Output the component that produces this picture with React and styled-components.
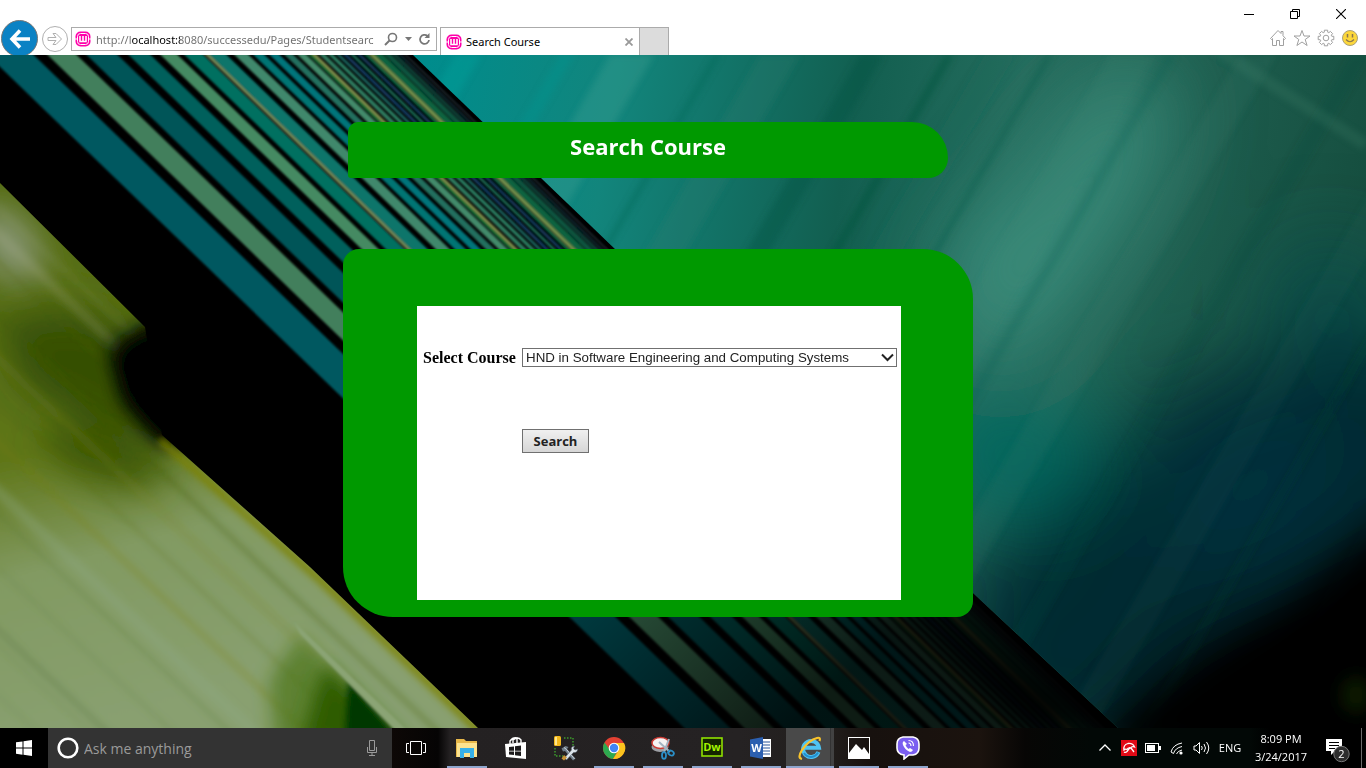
import React, { useState } from "react";
import styled, { createGlobalStyle } from "styled-components";

const uiFont = '"Open Sans", "Noto Sans", sans-serif';

const GlobalStyle = createGlobalStyle`
  *, *::before, *::after { box-sizing: border-box; }
  body { margin: 0; background: #000; font-family: ${uiFont}; }
  button, input { font: inherit; margin: 0; }
  svg { display: block; flex: none; }
`;

const Screen = styled.div`
  min-height: 100vh;
  display: flex;
  flex-direction: column;
`;

/* ---------- browser window ---------- */

const Chrome = styled.header`
  height: 55px;
  overflow: hidden;
  background: #fff;
  display: flex;
  justify-content: space-between;
  align-items: flex-start;
`;

const NavRow = styled.div`
  display: flex;
  align-items: flex-start;
  padding-top: 20px;
`;

const RoundButton = styled.button`
  width: ${(p) => p.$size}px;
  height: ${(p) => p.$size}px;
  margin: ${(p) => p.$margin};
  padding: 0;
  border: 1px solid ${(p) => p.$border};
  border-radius: 50%;
  background: ${(p) => p.$fill};
  display: flex;
  align-items: center;
  justify-content: center;
`;

const AddressBar = styled.div`
  width: 366px;
  height: 24px;
  margin-top: 7px;
  padding: 0 0 0 3px;
  border: 1px solid #ababab;
  display: flex;
  align-items: center;
`;

const AddressInput = styled.input`
  flex: 1;
  min-width: 0;
  height: 22px;
  margin-left: 5px;
  padding: 0;
  border: 0;
  outline: 0;
  font-family: "Noto Sans", sans-serif;
  font-size: 11px;
  color: #6d6d6d;
  background: linear-gradient(90deg, #6d6d6d 35px, #000 35px, #000 84px, #6d6d6d 84px);
  -webkit-background-clip: text;
  background-clip: text;
  -webkit-text-fill-color: transparent;
`;

const IconButton = styled.button`
  width: ${(p) => p.$w || 20}px;
  height: 22px;
  padding: 0;
  border: 0;
  background: transparent;
  display: flex;
  align-items: center;
  justify-content: center;
`;

const Tab = styled.div`
  width: 200px;
  height: 28px;
  margin: 7px 0 0 3px;
  padding: 0 3px 0 5px;
  border: 1px solid #ababab;
  border-bottom: 0;
  display: flex;
  align-items: center;
  color: #000;
`;

const TabTitle = styled.span`
  flex: 1;
  margin-left: 4px;
  font: 11px/16px "Noto Sans", sans-serif;
`;

const NewTab = styled.button`
  width: 29px;
  height: 28px;
  margin-top: 7px;
  padding: 0;
  border: 1px solid #ababab;
  border-width: 1px 1px 0 0;
  background: #dcdcdc;
`;

const WindowSide = styled.div`
  display: flex;
  flex-direction: column;
  align-items: flex-end;
`;

const WindowButtons = styled.div`
  display: flex;
  height: 27px;
  padding-right: 2px;
`;

const WindowButton = styled.button`
  width: 46px;
  height: 28px;
  padding: 0;
  border: 0;
  background: transparent;
  display: flex;
  align-items: center;
  justify-content: center;
`;

const ToolButtons = styled.div`
  display: flex;
  gap: 4px;
  padding-right: 6px;
`;

/* ---------- page ---------- */

const Viewport = styled.main`
  flex: 1;
  display: grid;
  grid-template: minmax(0, 1fr) / minmax(0, 1fr);
  overflow: hidden;
  background: #000;
`;

const Backdrop = styled.svg`
  grid-area: 1 / 1;
  width: 100%;
  height: 100%;
  min-height: 0;
`;

const Content = styled.div`
  grid-area: 1 / 1;
  z-index: 1;
  display: flex;
  justify-content: center;
  padding: 67px 50px 111px 0;
`;

const Column = styled.div`
  width: 630px;
`;

const Banner = styled.div`
  width: 600px;
  height: 56px;
  margin-left: 5px;
  padding-top: 8px;
  border-radius: 10px 36px 20px 3px;
  background: #009900;
`;

const BannerTitle = styled.h1`
  margin: 0;
  text-align: center;
  color: #fff;
  font: 700 22px/32px "Open Sans", sans-serif;
`;

const Panel = styled.section`
  margin-top: 71px;
  padding: 57px 72px 17px 74px;
  border-radius: 16px 50px 16px 50px;
  background: #009900;
`;

const Form = styled.form`
  min-height: 294px;
  padding: 42px 4px 0 6px;
  background: #fff;
  display: grid;
  grid-template-columns: 99px 1fr;
  grid-auto-rows: max-content;
  row-gap: 62px;
  align-items: center;
`;

const CourseLabel = styled.label`
  font: bold 16px/18px "Liberation Serif", serif;
  color: #000;
`;

const SelectWrap = styled.div`
  display: grid;
  align-items: center;
`;

const CourseSelect = styled.select`
  grid-area: 1 / 1;
  width: 100%;
  height: 19px;
  margin: 0;
  padding: 0 20px 0 3px;
  border: 1px solid #707070;
  border-radius: 0;
  appearance: none;
  background: transparent;
  color: #222;
  font-family: "Liberation Sans", sans-serif;
`;

const SelectArrow = styled.svg`
  grid-area: 1 / 1;
  justify-self: end;
  margin-right: 3px;
  pointer-events: none;
`;

const SearchButton = styled.button`
  grid-column: 2;
  justify-self: start;
  width: 67px;
  height: 24px;
  padding: 0;
  border: 1px solid #707070;
  background: linear-gradient(#f0f0f0, #d6d6d6);
  color: #222;
  font: bold 13px/20px "Open Sans", sans-serif;
`;

/* ---------- taskbar ---------- */

const Taskbar = styled.footer`
  height: 40px;
  display: flex;
  background: linear-gradient(
    90deg, #000 0, #000 48px, #0d0806 392px, #050404 438px, #242122 450px,
    #252223 740px, #221e1c 830px, #17110e 870px, #1b130e 980px, #070605 1025px,
    #020806 1090px, #020806 1250px, #000 1270px
  );
  color: #fff;
`;

const StartButton = styled.button`
  width: 48px;
  height: 40px;
  padding: 0;
  border: 0;
  background: #000;
  display: flex;
  align-items: center;
  justify-content: center;
`;

const Cortana = styled.label`
  width: 344px;
  height: 40px;
  padding: 0 12px 0 8px;
  background: #333;
  display: flex;
  align-items: center;
`;

const CortanaInput = styled.input`
  flex: 1;
  min-width: 0;
  margin-left: 4px;
  padding: 0;
  border: 0;
  outline: 0;
  background: transparent;
  font-size: 14px;
  color: #9a9a9a;
  &::placeholder { color: #9a9a9a; opacity: 1; }
`;

const AppRow = styled.div`
  display: flex;
  gap: 1px;
  margin-left: 3px;
`;

const openMark = "linear-gradient(#8ea5cd, #8ea5cd) center bottom / 40px 2px no-repeat";
const activeMark =
  "linear-gradient(#8ea5cd, #8ea5cd) center bottom / 100% 2px no-repeat, linear-gradient(90deg, #494949 44px, #333 44px, #333 45px, #424242 45px)";

const AppButton = styled.button`
  width: 48px;
  height: 40px;
  padding: 0;
  border: 0;
  background: ${(p) => (p.$active ? activeMark : p.$open ? openMark : "transparent")};
  display: flex;
  align-items: center;
  justify-content: center;
`;

const Tray = styled.div`
  margin-left: auto;
  display: flex;
  align-items: stretch;
  font-size: 11px;
`;

const TrayButton = styled.button`
  width: ${(p) => p.$w || 24}px;
  padding: ${(p) => p.$top || 0}px 0 0;
  border: 0;
  background: transparent;
  color: #fff;
  line-height: 18px;
  display: flex;
  flex-direction: column;
  align-items: center;
  justify-content: center;
`;

const ShowDesktop = styled.button`
  width: 5px;
  padding: 0;
  border: 0;
  border-left: 1px solid #6a6a6a;
  background: transparent;
`;

/* ---------- drawings ---------- */

function WampIcon() {
  return (
    <svg width="16" height="16" viewBox="0 0 16 16">
      <rect x="0.5" y="0.5" width="15" height="15" rx="5" fill="#f0a" />
      <rect x="2.5" y="2.5" width="11" height="11" rx="3" fill="none" stroke="#fff" strokeWidth="1" />
      <path d="M0 8h3M13 8h3" stroke="#fff" />
      <path d="M5 5v5.500h6V5M8 5v5" fill="none" stroke="#fff" strokeWidth="1.600" />
    </svg>
  );
}

// Each stripe: left edge and right edge along the top, and its colour.
const stripes = [
  [-13, 33, "#005861"], [47, 76, "#437f5c"], [86, 117, "#005558"], [128, 150, "#00605c"],
  [160, 177, "#458a62"], [184, 203, "#047060"], [205, 209, "#7d9058"], [209, 226, "#08756a"],
  [234, 248, "#41886c"], [253, 264, "#007573"], [269, 279, "#00747a"], [284, 293, "#246f5e"],
  [297, 306, "#438a6a"], [308, 312, "#087036"], [312, 316, "#84944f"], [319, 325, "#2f7a5e"],
  [328, 333, "#2c7e62"], [336, 340, "#1c6660"], [343, 347, "#144068"], [350, 354, "#186b54"],
  [357, 361, "#143c60"], [364, 368, "#086a45"], [369, 374, "#77934e"], [374, 383, "#096440"],
  [384, 391, "#0b5540"], [392, 397, "#103c36"], [399, 401, "#173844"], [404, 406, "#283239"],
];

const tealStreaks = [
  [455, 26, "#00a5a0", 0.45], [560, 14, "#009490", 0.5], [610, 44, "#4aa898", 0.38], [714, 7, "#056858", 0.6],
  [760, 40, "#287f70", 0.35], [860, 24, "#075343", 0.5], [945, 9, "#07543d", 0.7], [985, 30, "#266a5b", 0.4],
  [1046, 7, "#0b5948", 0.5], [1110, 45, "#408d7b", 0.2], [1165, 12, "#145f4b", 0.3], [1240, 36, "#3c8675", 0.18],
  [1350, 20, "#0a4d40", 0.25], [1450, 34, "#2a7166", 0.12], [1530, 12, "#06372e", 0.25], [1640, 30, "#0a506a", 0.15],
];

const greenStreaks = [
  [150, 8, "#8c9a70", 0.3], [174, 14, "#a8b08c", 0.35], [206, 4, "#455c1c", 0.6], [262, 6, "#3c5a0e", 0.6],
  [300, 10, "#78862a", 0.4], [344, 4, "#4c6414", 0.5], [384, 10, "#7a7c00", 0.35], [430, 16, "#90a988", 0.5],
  [458, 6, "#58753c", 0.45], [512, 5, "#5f7d42", 0.45], [572, 9, "#577441", 0.5], [590, 4, "#57753b", 0.4],
  [640, 4, "#5a783c", 0.35],
];

function Wallpaper() {
  return (
    <Backdrop viewBox="0 0 1366 673" preserveAspectRatio="xMidYMid slice" aria-hidden="true">
      <defs>
        <filter id="soft1"><feGaussianBlur stdDeviation="0.8" /></filter>
        <filter id="soft3"><feGaussianBlur stdDeviation="3" /></filter>
        <filter id="soft9" x="-40%" y="-40%" width="180%" height="180%"><feGaussianBlur stdDeviation="9" /></filter>
        <filter id="soft20" x="-60%" y="-60%" width="220%" height="220%"><feGaussianBlur stdDeviation="18" /></filter>
        <filter id="soft45" x="-60%" y="-60%" width="220%" height="220%"><feGaussianBlur stdDeviation="42" /></filter>
        <linearGradient id="teal" gradientUnits="userSpaceOnUse" x1="430" y1="0" x2="1366" y2="160">
          <stop offset="0" stopColor="#008c8c" />
          <stop offset="0.2" stopColor="#12857c" />
          <stop offset="0.45" stopColor="#125f50" />
          <stop offset="0.62" stopColor="#256c5d" />
          <stop offset="1" stopColor="#164f40" />
        </linearGradient>
        <linearGradient id="stripeShade" gradientUnits="userSpaceOnUse" x1="500" y1="380" x2="780" y2="680">
          <stop offset="0" stopColor="#000" stopOpacity="0" />
          <stop offset="0.45" stopColor="#000" stopOpacity="0.35" />
          <stop offset="1" stopColor="#000" stopOpacity="0.8" />
        </linearGradient>
        <linearGradient id="leaf" gradientUnits="userSpaceOnUse" x1="60" y1="150" x2="200" y2="640">
          <stop offset="0" stopColor="#536a10" />
          <stop offset="0.45" stopColor="#5f7618" />
          <stop offset="0.68" stopColor="#829a62" />
          <stop offset="1" stopColor="#89a070" />
        </linearGradient>
        <clipPath id="tealClip"><path d="M413 0H1366V673H1118L973 538Z" /></clipPath>
        <clipPath id="leafClip"><path d="M0 128L145 272L162 380L310 512L478 673H0Z" /></clipPath>
      </defs>
      <rect width="1366" height="673" fill="#000" />

      <g filter="url(#soft1)">
        {stripes.map(([a, b, color]) => (
          <path key={a} d={`M${a - 20} -20L${b - 20} -20L${b + 718} 693L${a + 718} 693Z`} fill={color} />
        ))}
      </g>
      <path d="M400 360L1300 360V673H400Z" fill="url(#stripeShade)" />
      <path d="M860 520L1120 673H1030L900 550Z" fill="#000" filter="url(#soft20)" />

      <g clipPath="url(#tealClip)">
        <rect width="1366" height="673" fill="url(#teal)" />
        <g filter="url(#soft45)">
          <ellipse cx="1080" cy="140" rx="60" ry="150" fill="#3d917f" opacity="0.8" transform="rotate(32 1080 140)" />
          <ellipse cx="1000" cy="230" rx="60" ry="80" fill="#3f9280" opacity="0.7" />
          <ellipse cx="1330" cy="250" rx="60" ry="60" fill="#08474a" opacity="0.7" />
          <ellipse cx="1010" cy="400" rx="90" ry="60" fill="#00685f" />
          <path d="M1500 300L1320 290L1180 330L1070 440L960 520L950 700H1500Z" fill="#012c32" />
          <ellipse cx="1250" cy="430" rx="50" ry="90" fill="#033244" opacity="0.7" transform="rotate(50 1250 430)" />
          <path d="M1520 430L1330 520L1180 590L1060 720H1500Z" fill="#000" />
        </g>
        <g filter="url(#soft3)">
          {tealStreaks.map(([x, w, color, o]) => (
            <path key={x} d={`M${x} 0h${w}L${x + w - 390} 673h${-w}Z`} fill={color} opacity={o * 0.75} />
          ))}
        </g>
        <path d="M1210 -10L1366 90" stroke="#4a8a72" strokeWidth="12" opacity="0.2" filter="url(#soft3)" />
        <path d="M1400 450L1290 550L1110 670V700H1400Z" fill="#000" filter="url(#soft20)" />
      </g>
      <ellipse cx="1356" cy="640" rx="14" ry="18" fill="#123004" filter="url(#soft9)" opacity="0.6" />

      <g clipPath="url(#leafClip)">
        <g filter="url(#soft1)">
          <rect x="-20" y="-20" width="520" height="720" fill="url(#leaf)" />
          <ellipse cx="8" cy="190" rx="26" ry="46" fill="#8a987a" filter="url(#soft20)" transform="rotate(-35 8 190)" />
          <ellipse cx="104" cy="400" rx="62" ry="26" fill="#3d5600" filter="url(#soft20)" transform="rotate(20 104 400)" />
          <path d="M0 262L80 255L150 280L170 400L100 380L20 330Z" fill="#2a4400" filter="url(#soft20)" opacity="0.75" />
          <g filter="url(#soft3)">
            {greenStreaks.map(([y, h, color, o]) => (
              <path key={y} d={`M-10 ${y - 9}v${h}L500 ${y + h + 470}v${-h}Z`} fill={color} opacity={o * 0.6} />
            ))}
          </g>
          <path d="M110 290L155 262L185 390L160 385L125 345Z" fill="#0a1a00" filter="url(#soft9)" />
          <path d="M112 300L146 276L190 270V388H160L124 345Z" fill="#000" filter="url(#soft9)" />
          <path d="M160 385L320 525L485 682" fill="none" stroke="#7d8200" strokeWidth="8" opacity="0.8" filter="url(#soft3)" />
          <path d="M300 580L405 690H275L270 625Z" fill="#4c7512" filter="url(#soft9)" opacity="0.7" />
          <path d="M325 610L405 690H300Z" fill="#2f5c00" filter="url(#soft9)" />
          <path d="M348 625L405 690H345Z" fill="#043800" filter="url(#soft3)" />
          <path d="M294 567L410 678H398L300 579Z" fill="#8ba474" />
        </g>
      </g>
    </Backdrop>
  );
}

const glyph = { fill: "none", stroke: "#fff", strokeWidth: 1 };

const ExplorerIcon = () => (
  <svg width="24" height="24" viewBox="0 0 24 24">
    <path d="M1 3h8l2 2h11v16H1z" fill="#e8b84a" />
    <path d="M2 7h20v14H2z" fill="#fce38f" />
    <path d="M5 21v-9h14v10h-4v-5H9v5H5z" fill="#36b0e8" />
  </svg>
);
const StoreIcon = () => (
  <svg width="24" height="24" viewBox="0 0 24 24">
    <path d="M6 8V5q3-4 7-3v5M9 7V4q5-4 8 0v3" fill="none" stroke="#fff" strokeWidth="1.400" />
    <path d="M1 8l21-2v17L2 21z" fill="#fff" />
    <path d="M5 11l5-.6v4.300H5zM11 10.300l6-.8v5.200h-6zM5 15.500h5V19l-5-.6zM11 15.500h6v4.400l-6-.7z" fill="#1c1a1b" />
  </svg>
);
const ToolsIcon = () => (
  <svg width="26" height="26" viewBox="0 0 26 26">
    <path d="M12 3h9v9M3 13v8h8" fill="none" stroke="#3c9a2c" strokeWidth="1.500" strokeDasharray="1.500 1.500" />
    <rect x="2" y="1" width="7" height="10" rx="1.500" fill="#f2b81c" />
    <path d="M3 2h2v8H3z" fill="#ffe58a" />
    <path d="M9.500 13.500l4-2.500 3 1-1.500 2 8.500 9.500-2.500 2-8-9.500-2 .5z" fill="#6f7d89" />
    <path d="M12 12.500l2.500 2 8 9.500" fill="none" stroke="#cdd6dd" />
    <path d="M12.500 23l7-8q-1-3.500 3-4l-1 2.500 1.500 1.500 2.500-1q0 4-4 3.500l-7 7.500z" fill="#dce4ea" stroke="#56636e" strokeWidth=".6" />
    <path d="M12 20l3 2.500-3 3-2.500-2z" fill="#c89438" />
  </svg>
);
const ChromeIcon = () => (
  <svg width="24" height="24" viewBox="0 0 24 24">
    <circle cx="12" cy="12" r="11" fill="#e34133" />
    <path d="M2.500 6.500A11 11 0 0 0 11 23l5-9H8z" fill="#2da94f" />
    <path d="M11 23A11 11 0 0 0 22 7H12l4.500 7.500z" fill="#fcc31e" />
    <circle cx="12" cy="12" r="5.300" fill="#fff" />
    <circle cx="12" cy="12" r="4.200" fill="#4285f4" />
  </svg>
);
const SnipIcon = () => (
  <svg width="24" height="24" viewBox="0 0 24 24">
    <ellipse cx="9" cy="11" rx="8.500" ry="5" fill="#9d9fa4" />
    <ellipse cx="9.500" cy="7" rx="8.500" ry="5.500" fill="#f6f3f3" stroke="#cc3b34" strokeWidth="1.500" />
    <path d="M8 6l11 10M18 3l-5 13" stroke="#a4b4c2" strokeWidth="2" />
    <ellipse cx="20" cy="17" rx="3" ry="2.200" fill="none" stroke="#2b8fc7" strokeWidth="1.800" transform="rotate(30 20 17)" />
    <ellipse cx="13" cy="19.500" rx="2" ry="3.300" fill="none" stroke="#2b8fc7" strokeWidth="1.800" />
  </svg>
);
const DwIcon = () => (
  <svg width="22" height="24" viewBox="0 0 22 24">
    <rect x="1" y="2" width="20" height="18" fill="#142500" stroke="#8fe000" strokeWidth="1.600" />
    <text x="11" y="15" textAnchor="middle" fill="#a4f600" fontFamily="Open Sans" fontWeight="700" fontSize="11">Dw</text>
  </svg>
);
const WordIcon = () => (
  <svg width="24" height="24" viewBox="0 0 24 24">
    <rect x="12" y="3" width="10" height="18" fill="#fff" />
    <path d="M14 6h7M14 9h7M14 12h7M14 15h7M14 18h7" stroke="#2b579a" strokeWidth="1.200" />
    <path d="M1 3.500L14 1v22L1 20.500z" fill="#2b5fb0" />
    <text x="7.500" y="16" textAnchor="middle" fill="#fff" fontFamily="Open Sans" fontWeight="700" fontSize="11">W</text>
  </svg>
);
const IeIcon = () => (
  <svg width="26" height="26" viewBox="0 0 26 26">
    <path d="M21.500 17A8 8 0 1 1 22 12.800H8" fill="none" stroke="#4fc3f2" strokeWidth="4" />
    <path d="M21 17.500A8 8 0 0 1 7 18" fill="none" stroke="#218fd0" strokeWidth="2" />
    <path d="M5 24Q0 23 5 15Q12 5 20 3Q24 2 22.500 6" fill="none" stroke="#f8c32c" strokeWidth="2.200" />
  </svg>
);
const PhotosIcon = () => (
  <svg width="22" height="22" viewBox="0 0 22 22">
    <rect x=".5" y=".5" width="21" height="21" {...glyph} />
    <path d="M1 16l7-9 6 6 2-3 5 7v4H1z" fill="#fff" />
  </svg>
);
const ViberIcon = () => (
  <svg width="24" height="24" viewBox="0 0 24 24">
    <path d="M7 1h10q6 1 6 7v4q0 6-6 7h-4l-5 4v-4q-7-1-7-7V8q0-6 6-7z" fill="#7b5ff0" stroke="#fff" strokeWidth="1.600" />
    <path d="M8 5q-2 1-1 4 2 5 7 7 2 0 3-2l-3-2-1.500 1Q10 11 9.500 9L11 8z" fill="#fff" />
    <path d="M12.500 4.500q5 0 5 5.500M12.500 7q2.500 0 2.500 3" fill="none" stroke="#fff" strokeWidth="1.100" />
  </svg>
);

const apps = [
  { name: "File Explorer", Icon: ExplorerIcon, open: true },
  { name: "Store", Icon: StoreIcon },
  { name: "Configuration tools", Icon: ToolsIcon },
  { name: "Chrome", Icon: ChromeIcon, open: true },
  { name: "Snipping Tool", Icon: SnipIcon, open: true },
  { name: "Dreamweaver", Icon: DwIcon, open: true },
  { name: "Word", Icon: WordIcon, open: true },
  { name: "Internet Explorer", Icon: IeIcon, open: true, active: true },
  { name: "Photos", Icon: PhotosIcon, open: true },
  { name: "Viber", Icon: ViberIcon, open: true },
];

function BrowserChrome() {
  return (
    <Chrome>
      <NavRow>
        <RoundButton $size={37} $margin="0 0 0 1px" $fill="#0b82c4" $border="#777" aria-label="Back">
          <svg width="22" height="22" viewBox="0 0 22 22">
            <path d="M11 2.500L3 11l8 8.500M3 11h18" fill="none" stroke="#fff" strokeWidth="3.600" />
          </svg>
        </RoundButton>
        <RoundButton $size={26} $margin="6px 3px 0 4px" $fill="#fff" $border="#b0b0b0" aria-label="Forward">
          <svg width="16" height="16" viewBox="0 0 16 16">
            <path d="M1 6.500h8L6 2.500h3L14.500 8 9 13.500H6l3-4H1z" fill="none" stroke="#b0b0b0" />
          </svg>
        </RoundButton>
        <AddressBar>
          <WampIcon />
          <AddressInput aria-label="Address" defaultValue="http://localhost:8080/successedu/Pages/Studentsearc" />
          <IconButton $w={24} aria-label="Search the web">
            <svg width="14" height="14" viewBox="0 0 14 14" fill="none" stroke="#777">
              <circle cx="8.500" cy="5.500" r="4" strokeWidth="1.600" />
              <path d="M5.500 8.500L1 13" strokeWidth="2" />
            </svg>
          </IconButton>
          <IconButton $w={10} aria-label="Show addresses">
            <svg width="7" height="4" viewBox="0 0 7 4"><path d="M0 0h7L3.500 4z" fill="#777" /></svg>
          </IconButton>
          <IconButton $w={23} aria-label="Refresh">
            <svg width="13" height="14" viewBox="0 0 13 14">
              <path d="M9.500 4A4.500 4.500 0 1 0 11 8" fill="none" stroke="#777" strokeWidth="1.800" />
              <path d="M11.500 1v5h-5z" fill="#777" />
            </svg>
          </IconButton>
        </AddressBar>
        <Tab>
          <WampIcon />
          <TabTitle>Search Course</TabTitle>
          <IconButton $w={14} aria-label="Close tab">
            <svg width="8" height="8" viewBox="0 0 8 8"><path d="M.5.5l7 7M7.500.5l-7 7" stroke="#999" strokeWidth="1.800" /></svg>
          </IconButton>
        </Tab>
        <NewTab aria-label="New tab" />
      </NavRow>
      <WindowSide>
        <WindowButtons>
          <WindowButton aria-label="Minimize">
            <svg width="10" height="10" viewBox="0 0 10 10"><path d="M0 5.500h10" stroke="#000" /></svg>
          </WindowButton>
          <WindowButton aria-label="Restore">
            <svg width="10" height="10" viewBox="0 0 10 10" fill="none" stroke="#000">
              <path d="M.5 2.500h7v7h-7zM2.500 2V.5h7v7H8" />
            </svg>
          </WindowButton>
          <WindowButton aria-label="Close">
            <svg width="10" height="10" viewBox="0 0 10 10"><path d="M0 0l10 10M10 0L0 10" stroke="#000" strokeWidth="1.100" /></svg>
          </WindowButton>
        </WindowButtons>
        <ToolButtons>
          <IconButton aria-label="Home">
            <svg width="18" height="18" viewBox="0 0 18 18" fill="#fff" stroke="#a0a0a0">
              <path d="M1.500 9.500L9 1.500l3 3v-2h2v4.200l2.500 2.800-1 1-1-1v7h-4v-5h-3v5h-4v-7l-1 1z" />
            </svg>
          </IconButton>
          <IconButton aria-label="Favorites">
            <svg width="18" height="18" viewBox="0 0 18 18" fill="none" stroke="#a0a0a0">
              <path d="M9 1.500l2 5.500h6l-4.800 3.500 1.900 6L9 13l-5.100 3.500 1.900-6L1 7h6z" />
            </svg>
          </IconButton>
          <IconButton aria-label="Tools">
            <svg width="18" height="18" viewBox="0 0 18 18" fill="none" stroke="#a0a0a0">
              <path d="M7.300 3.200V1.200h3.400v2l1.100.5 1.600-1.300 2.200 2.200-1.300 1.600.5 1.100h2v3.400h-2l-.5 1.100 1.300 1.600-2.200 2.200-1.600-1.300-1.100.5v2H7.300v-2l-1.100-.5-1.600 1.300-2.200-2.200 1.300-1.600-.5-1.100h-2V7.300h2l.5-1.100-1.300-1.600 2.200-2.200 1.600 1.300z" />
              <circle cx="9" cy="9" r="2.800" />
            </svg>
          </IconButton>
          <IconButton aria-label="Send a smile">
            <svg width="16" height="16" viewBox="0 0 16 16">
              <circle cx="8" cy="8" r="7.500" fill="#fcd73b" stroke="#aaa07a" />
              <path d="M5.500 4v3.500M10.500 4v3.500" stroke="#8a7550" strokeWidth="1.500" />
              <path d="M4 9.500q4 4.500 8 0" fill="none" stroke="#8a7550" strokeWidth="1.200" />
            </svg>
          </IconButton>
        </ToolButtons>
      </WindowSide>
    </Chrome>
  );
}

function SearchForm() {
  const [course, setCourse] = useState("hnd-se");
  return (
    <Form onSubmit={(e) => e.preventDefault()}>
      <CourseLabel htmlFor="course">Select Course</CourseLabel>
      <SelectWrap>
        <CourseSelect id="course" value={course} onChange={(e) => setCourse(e.target.value)}>
          <option value="hnd-se">HND in Software Engineering and Computing Systems</option>
        </CourseSelect>
        <SelectArrow width="13" height="9" viewBox="0 0 13 9">
          <path d="M1 1.500l5.500 5.500L12 1.500" fill="none" stroke="#222" strokeWidth="2" />
        </SelectArrow>
      </SelectWrap>
      <SearchButton type="submit">Search</SearchButton>
    </Form>
  );
}

function SystemTray() {
  return (
    <Tray>
      <TrayButton aria-label="Show hidden icons">
        <svg width="12" height="8" viewBox="0 0 12 8"><path d="M.5 6.500L6 1l5.500 5.500" {...glyph} strokeWidth="1.300" /></svg>
      </TrayButton>
      <TrayButton aria-label="Antivirus">
        <svg width="16" height="16" viewBox="0 0 16 16">
          <rect width="16" height="16" fill="#e20a16" />
          <path d="M3 10Q2 5 7 3.500 12 3 13.500 7 11 6 9.500 8 7 7.500 6 9.500 4.500 8.500 3 10z" fill="none" stroke="#fff" strokeWidth="1.300" />
          <path d="M9 7.500l-3 4q-1.500 1.500-3 .5M10 8l3 4" fill="none" stroke="#fff" strokeWidth="1.300" />
        </svg>
      </TrayButton>
      <TrayButton aria-label="Battery">
        <svg width="16" height="10" viewBox="0 0 16 10">
          <rect x=".5" y=".5" width="13" height="9" {...glyph} />
          <path d="M2 2h8v6H2zM14 3h2v4h-2z" fill="#fff" />
        </svg>
      </TrayButton>
      <TrayButton aria-label="Wi-Fi">
        <svg width="14" height="14" viewBox="0 0 14 14">
          <path d="M1 11Q3 3.500 12 2M3.500 12.500Q5 7 12 5.500M6.500 13Q7.500 10 12 9M1 11l2.500 1.500" {...glyph} />
          <circle cx="11" cy="12" r="1.600" fill="#fff" />
        </svg>
      </TrayButton>
      <TrayButton aria-label="Volume">
        <svg width="17" height="14" viewBox="0 0 17 14">
          <path d="M1 5h2l3.500-3.500v11L3 9H1zM8.500 5q1.500 2 0 4M11 3q3 4 0 8M13.500 1q4.500 6 0 12" {...glyph} />
        </svg>
      </TrayButton>
      <TrayButton $w={34}>ENG</TrayButton>
      <TrayButton $w={68}>
        <span>8:09 PM</span>
        <span>3/24/2017</span>
      </TrayButton>
      <TrayButton $w={46} $top={4} aria-label="Notifications">
        <svg width="24" height="26" viewBox="0 0 24 26">
          <path d="M0 2h16v12H9l-4 4v-4H0z" fill="#fff" />
          <path d="M3 5.500h10M3 8.500h10M3 11.500h6" stroke="#000" />
          <circle cx="15.500" cy="17" r="7.700" fill="#2d2d2d" stroke="#777" />
          <text x="15.500" y="21" textAnchor="middle" fill="#fff" fontFamily="Open Sans" fontSize="11">2</text>
        </svg>
      </TrayButton>
      <ShowDesktop aria-label="Show desktop" />
    </Tray>
  );
}

export default function App() {
  return (
    <Screen>
      <GlobalStyle />
      <BrowserChrome />
      <Viewport>
        <Wallpaper />
        <Content>
          <Column>
            <Banner>
              <BannerTitle>Search Course</BannerTitle>
            </Banner>
            <Panel>
              <SearchForm />
            </Panel>
          </Column>
        </Content>
      </Viewport>
      <Taskbar>
        <StartButton aria-label="Start">
          <svg width="16" height="16" viewBox="0 0 16 16">
            <path d="M0 2.300L6.500 1.400v6.200H0zM7.500 1.200L16 0v7.600H7.500zM0 8.500h6.500v6.200L0 13.800zM7.500 8.500H16V16l-8.500-1.200z" fill="#fff" />
          </svg>
        </StartButton>
        <Cortana>
          <svg width="24" height="24" viewBox="0 0 24 24"><circle cx="12" cy="12" r="9.300" fill="none" stroke="#fff" strokeWidth="2.600" /></svg>
          <CortanaInput aria-label="Ask me anything" placeholder="Ask me anything" />
          <svg width="16" height="18" viewBox="0 0 16 18" fill="none" stroke="#9a9a9a">
            <path d="M5.500 1.500h5v10h-5zM3.500 8v5.500h9V8M8 13.500V17M5 16.500h6" />
          </svg>
        </Cortana>
        <AppButton aria-label="Task view">
          <svg width="20" height="14" viewBox="0 0 20 14" {...glyph}>
            <path d="M4.500.5h11v13h-11zM3 2.500H.5v9H3M17 2.500h2.500v9H17" />
          </svg>
        </AppButton>
        <AppRow>
          {apps.map(({ name, Icon, open, active }) => (
            <AppButton key={name} $open={open} $active={active} aria-label={name}>
              <Icon />
            </AppButton>
          ))}
        </AppRow>
        <SystemTray />
      </Taskbar>
    </Screen>
  );
}
